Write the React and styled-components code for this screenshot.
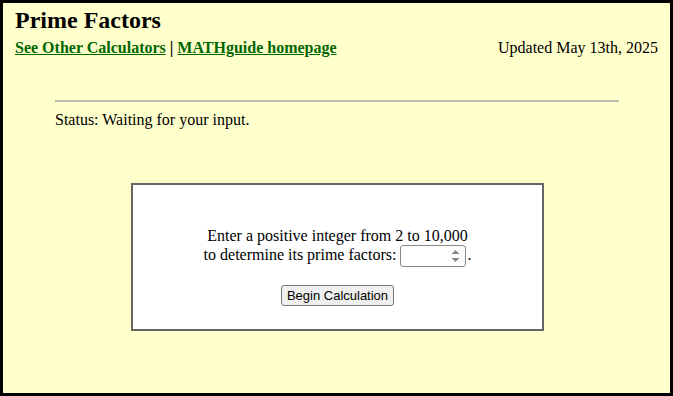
import React from 'react';
import styled, { createGlobalStyle } from 'styled-components';

const GlobalStyle = createGlobalStyle`
  html, body {
    margin: 0;
    padding: 0;
    background: #ffffcc;
  }
`;

const Page = styled.div`
  box-sizing: border-box;
  width: 673px;
  height: 396px;
  border: 3px solid #000;
  background: #ffffcc;
  padding: 3px 12px 0 12px;
  font-family: "Liberation Serif", "Times New Roman", serif;
  color: #000;
`;

const Title = styled.h1`
  margin: 0;
  font-size: 24px;
  font-weight: bold;
  line-height: 28px;
`;

const NavRow = styled.div`
  display: flex;
  justify-content: space-between;
  align-items: baseline;
  font-size: 16px;
  line-height: 22px;
  margin-top: 3px;
`;

const NavLinks = styled.div`
  font-weight: bold;
`;

const NavLink = styled.a`
  color: #006600;
  text-decoration: underline;
`;

const Updated = styled.div`
  font-weight: normal;
`;

const Main = styled.div`
  margin: 41px 39px 0 40px;
`;

const Rule = styled.hr`
  margin: 0;
  border: none;
  border-top: 2px solid #bdbdb0;
  height: 0;
`;

const Status = styled.p`
  margin: 8px 0 0 0;
  font-size: 16px;
  line-height: 20px;
`;

const Box = styled.div`
  box-sizing: border-box;
  width: 413px;
  height: 148px;
  margin: 53px 0 0 76px;
  background: #fff;
  border: 2px solid #666;
  display: flex;
  flex-direction: column;
  align-items: center;
  padding-top: 41px;
  font-size: 16px;
  line-height: 19px;
  text-align: center;
`;

const Prompt = styled.div``;

const NumberInput = styled.input`
  box-sizing: border-box;
  width: 66px;
  height: 22px;
  margin: 0 1px 0 0;
  vertical-align: middle;
  border: 1px solid #888;
  border-radius: 3px;
  font-size: 13px;
  &::-webkit-inner-spin-button {
    opacity: 1;
  }
`;

const Button = styled.button`
  margin-top: 18px;
  font-family: "Liberation Sans", Arial, sans-serif;
  font-size: 13px;
  padding: 2px 5px;
  background: #efefef;
  border: 1px solid #767676;
  border-radius: 3px;
  color: #000;
`;

export default function App() {
  return (
    <>
      <GlobalStyle />
      <Page>
        <Title>Prime Factors</Title>
        <NavRow>
          <NavLinks>
            <NavLink href="#">See Other Calculators</NavLink> |{' '}
            <NavLink href="#">MATHguide homepage</NavLink>
          </NavLinks>
          <Updated>Updated May 13th, 2025</Updated>
        </NavRow>
        <Main>
          <Rule />
          <Status>Status: Waiting for your input.</Status>
          <Box>
            <Prompt>Enter a positive integer from 2 to 10,000</Prompt>
            <Prompt>
              to determine its prime factors: <NumberInput type="number" />.
            </Prompt>
            <Button>Begin Calculation</Button>
          </Box>
        </Main>
      </Page>
    </>
  );
}
